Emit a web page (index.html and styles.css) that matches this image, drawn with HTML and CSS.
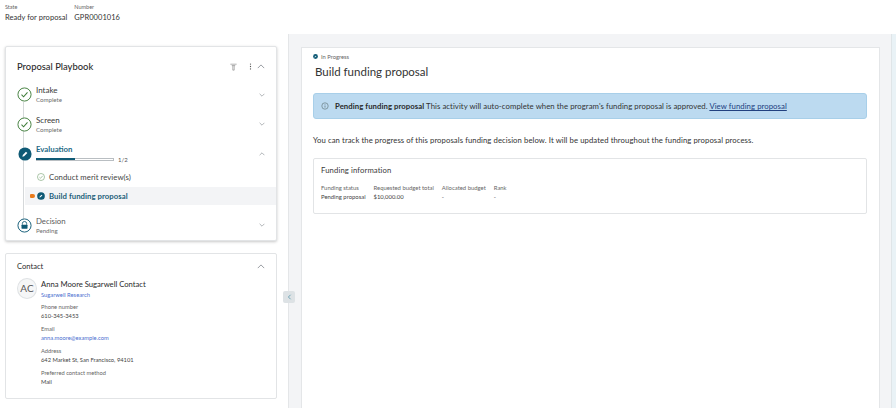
FILE: index.html
```html
<!DOCTYPE html>
<html lang="en">
<head>
<meta charset="utf-8">
<title>Build funding proposal</title>
<link rel="stylesheet" href="styles.css">
</head>
<body>
<header class="top">
  <div class="field"><span class="field-label">State</span><span class="field-value">Ready for proposal</span></div>
  <div class="field"><span class="field-label">Number</span><span class="field-value">GPR0001016</span></div>
</header>
<div class="layout">
  <aside class="side">
    <section class="card playbook">
      <div class="pb-head">
        <h2>Proposal Playbook</h2>
        <svg class="ic-filter" viewBox="0 0 10 10"><path d="M.5 1h9M2.500 3h5M4 3v6.500h2V3" fill="none" stroke="#777" stroke-width=".8"/></svg>
        <svg class="ic-dots" viewBox="0 0 4 10"><circle cx="2" cy="1.500" r=".9"/><circle cx="2" cy="5" r=".9"/><circle cx="2" cy="8.500" r=".9"/></svg>
        <svg class="chev big" viewBox="0 0 10 6"><path d="M1 5l4-4 4 4"/></svg>
      </div>
      <div class="stages">
        <div class="stage">
          <svg class="stage-ic" viewBox="0 0 16 16"><circle cx="8" cy="8" r="7" fill="#fff" stroke="#3f7d3a" stroke-width="1"/><path d="M4.800 8.200l2.200 2.200 4.200-4.600" fill="none" stroke="#3f7d3a" stroke-width="1.100"/></svg>
          <div class="stage-text"><span class="stage-name">Intake</span><span class="stage-sub">Complete</span></div>
          <svg class="chev" viewBox="0 0 10 6"><path d="M1 1l4 4 4-4"/></svg>
        </div>
        <div class="stage s-screen">
          <svg class="stage-ic" viewBox="0 0 16 16"><circle cx="8" cy="8" r="7" fill="#fff" stroke="#3f7d3a" stroke-width="1"/><path d="M4.800 8.200l2.200 2.200 4.200-4.600" fill="none" stroke="#3f7d3a" stroke-width="1.100"/></svg>
          <div class="stage-text"><span class="stage-name">Screen</span><span class="stage-sub">Complete</span></div>
          <svg class="chev" viewBox="0 0 10 6"><path d="M1 1l4 4 4-4"/></svg>
        </div>
        <div class="stage s-eval">
          <svg class="stage-ic" viewBox="0 0 16 16"><circle cx="8" cy="8" r="7.500" fill="#0f5a75"/><path d="M5 11l.5-2 3.600-3.700 1.600 1.600L7 10.500z" fill="#fff"/></svg>
          <div class="stage-text"><span class="stage-name active">Evaluation</span>
            <span class="progress"><span class="track"><span class="fill"></span></span><span class="count">1/2</span></span>
          </div>
          <svg class="chev" viewBox="0 0 10 6"><path d="M1 5l4-4 4 4"/></svg>
        </div>
        <div class="task t-done">
          <svg class="task-ic" viewBox="0 0 10 10"><circle cx="5" cy="5" r="4.400" fill="none" stroke="#6c9a67" stroke-width=".7"/><path d="M3 5.200l1.400 1.400 2.700-3" fill="none" stroke="#6c9a67" stroke-width=".7"/></svg>
          <span>Conduct merit review(s)</span>
        </div>
        <div class="task t-current">
          <span class="marker"></span>
          <svg class="task-ic" viewBox="0 0 10 10"><circle cx="5" cy="5" r="4.800" fill="#0f5a75"/><path d="M3 7l.4-1.300 2.300-2.300 1 1-2.400 2.200z" fill="#fff"/></svg>
          <span>Build funding proposal</span>
        </div>
        <div class="stage s-decision">
          <svg class="stage-ic" viewBox="0 0 16 16"><circle cx="8" cy="8" r="7" fill="#fff" stroke="#0f5a75" stroke-width="1"/><path d="M5.700 7.200V6a2.300 2.300 0 0 1 4.600 0v1.200" fill="none" stroke="#0f5a75" stroke-width=".9"/><rect x="4.800" y="7.200" width="6.400" height="4.200" rx=".5" fill="#0f5a75"/></svg>
          <div class="stage-text"><span class="stage-name muted">Decision</span><span class="stage-sub">Pending</span></div>
          <svg class="chev" viewBox="0 0 10 6"><path d="M1 1l4 4 4-4"/></svg>
        </div>
      </div>
    </section>
    <section class="card contact">
      <div class="contact-head"><h3>Contact</h3><svg class="chev big" viewBox="0 0 10 6"><path d="M1 5l4-4 4 4"/></svg></div>
      <div class="contact-body">
        <div class="avatar">AC</div>
        <div class="contact-info">
          <div class="contact-name">Anna Moore Sugarwell Contact</div>
          <a class="link org">Sugarwell Research</a>
          <dl>
            <dt>Phone number</dt><dd>610-345-3453</dd>
            <dt>Email</dt><dd><a class="link">anna.moore@example.com</a></dd>
            <dt>Address</dt><dd>642 Market St, San Francisco, 94101</dd>
            <dt>Preferred contact method</dt><dd>Mail</dd>
          </dl>
        </div>
      </div>
    </section>
  </aside>
  <main class="main">
    <button class="collapse" aria-label="Collapse"><svg viewBox="0 0 6 8"><path d="M4.500 1L1.500 4l3 3" fill="none" stroke="#4f93a8" stroke-width="1"/></svg></button>
    <article class="panel">
      <div class="status"><svg viewBox="0 0 10 10"><circle cx="5" cy="5" r="4.800" fill="#0f5a75"/><path d="M3 7l.4-1.300 2.300-2.300 1 1-2.400 2.200z" fill="#fff"/></svg><span>In Progress</span></div>
      <h1>Build funding proposal</h1>
      <div class="banner">
        <svg viewBox="0 0 10 10"><circle cx="5" cy="5" r="4" fill="none" stroke="#566" stroke-width=".7"/><path d="M5 4.400v2.600M5 3v.8" stroke="#566" stroke-width=".8"/></svg>
        <p><b>Pending funding proposal</b> This activity will auto-complete when the program's funding proposal is approved. <a>View funding proposal</a></p>
      </div>
      <p class="intro">You can track the progress of this proposals funding decision below. It will be updated throughout the funding proposal process.</p>
      <section class="funding">
        <h4>Funding information</h4>
        <div class="fund-grid">
          <span class="fl">Funding status</span><span class="fl">Requested budget total</span><span class="fl">Allocated budget</span><span class="fl">Rank</span>
          <span>Pending proposal</span><span>$10,000.00</span><span>-</span><span>-</span>
        </div>
      </section>
    </article>
  </main>
  <div class="strip"></div>
</div>
</body>
</html>
```
FILE: styles.css
```css
* { box-sizing: border-box; }
html, body { margin: 0; height: 100%; }
body { width: 896px; height: 408px; overflow: hidden; background: #fff; font-family: Lato, "Open Sans", sans-serif; color: #2e2e2e; }
svg { display: block; flex: none; }
h1, h2, h3, h4, p, dl, dd { margin: 0; font-weight: 400; }

.top { height: 34px; display: flex; gap: 7px; padding: 4px 5px 0; }
.field { display: flex; flex-direction: column; }
.field-label { font-size: 5.500px; line-height: 7px; color: #666; }
.field-value { font-size: 7.500px; line-height: 13px; color: #333; letter-spacing: .05px; }

.layout { display: flex; height: 374px; }
.side { width: 289px; flex: none; padding: 12px 11px 0 5px; border-right: 1px solid #e4e6e8; display: flex; flex-direction: column; gap: 12px; }
.card { width: 272px; background: #fff; border: 1px solid #e2e4e6; border-radius: 2px; }
.playbook { height: 195px; box-shadow: 0 1px 3px rgba(0,0,0,.22); }
.pb-head { height: 33px; display: flex; align-items: center; padding: 6px 11px 0 11px; }
.pb-head h2 { font-size: 9.400px; flex: 1; color: #2b2b2b; font-weight: 500; }
.ic-filter { width: 7px; height: 8px; margin-right: 12px; }
.ic-dots { width: 3px; height: 7px; margin-right: 5.500px; fill: #555; }
.chev { width: 6px; height: 4px; fill: none; stroke: #8a8f94; stroke-width: 1.100; margin-left: auto; }
.chev.big { width: 8px; height: 5px; margin-left: 0; stroke: #8c9196; }

.stages { position: relative; }
.stages::before { content: ""; position: absolute; left: 17px; top: 22px; bottom: 14px; width: 1px; background: #d5d8da; }
.stage { position: relative; display: flex; align-items: center; padding: 0 11px; height: 29px; }
.s-screen { height: 30px; }
.stage-ic { width: 15px; height: 15px; margin-right: 4px; }
.s-eval .stage-ic { width: 14px; height: 14px; margin-left: .5px; margin-right: 4.500px; }
.stage-text { display: flex; flex-direction: column; }
.stage-name { font-size: 8px; line-height: 11px; color: #3a3a3a; }
.stage-name.active { font-size: 7.800px; color: #1e6a86; font-weight: 700; }
.stage-name.muted { font-size: 7.800px; color: #5a5a5a; }
.stage-sub { font-size: 6.100px; line-height: 8px; color: #6e6e6e; }
.s-eval { height: 28px; margin-top: .5px; }
.progress { display: flex; align-items: center; gap: 4px; height: 9px; }
.track { width: 78px; height: 3px; border: 1px solid #b9bec2; display: block; position: relative; background: #fff; }
.fill { position: absolute; left: -1px; top: -1px; height: 2.500px; width: 39px; background: #0f5a75; }
.count { font-size: 6px; color: #555; }

.task { display: flex; align-items: center; height: 18px; margin-left: 19px; padding-left: 12px; gap: 4px; font-size: 7.750px; letter-spacing: .05px; color: #444; position: relative; }
.task-ic { width: 8px; height: 8px; }
.t-done { margin-top: .5px; margin-bottom: 1px; }
.t-current { background: #f3f4f6; font-weight: 700; color: #1e5f7a; }
.s-decision { margin-top: 5px; height: 30px; }
.marker { position: absolute; left: 5px; top: 7px; width: 5px; height: 4px; border-radius: 1px 2px 2px 1px; background: #e87a1c; }

.contact { height: 146px; }
.contact-head { display: flex; justify-content: space-between; align-items: center; padding: 6px 11px 0; height: 18px; }
.contact-head h3 { font-size: 7.600px; color: #2e2e2e; }
.contact-body { display: flex; padding: 7px 0 0 11px; gap: 4px; }
.avatar { width: 20px; height: 21px; margin-top: -1px; flex: none; border-radius: 50%; border: 1px solid #dfe2e4; background: #f5f6f7; font-size: 10px; line-height: 19px; text-align: center; color: #555; }
.contact-name { font-size: 7.700px; line-height: 11px; color: #2b2b2b; letter-spacing: -.02px; }
.link { color: #4a6fd0; }
.org { display: block; font-size: 5.800px; line-height: 9px; }
dl { margin-top: 2.500px; }
dt { font-size: 5.750px; line-height: 9px; color: #666; }
dd { font-size: 5.750px; line-height: 9px; color: #444; margin-bottom: 4px; }

.main { position: relative; flex: 1; background: #f3f4f6; padding: 13px 11px 0 12px; min-width: 0; }
.panel { height: 361px; background: #fff; border: 1px solid #e4e6e8; border-bottom: 0; padding: 5px 12px 0 11px; }
.collapse { position: absolute; left: -6px; top: 257px; width: 12px; height: 12px; padding: 0; border: 0; border-radius: 2px; background: #dde2e5; display: flex; align-items: center; justify-content: center; }
.collapse svg { width: 5px; height: 6px; }
.status { display: flex; align-items: center; gap: 3px; font-size: 5.800px; line-height: 7px; color: #666; }
.status svg { width: 5px; height: 5px; }
h1 { font-size: 11.500px; line-height: 16px; margin: 3.500px 0 0 2px; color: #333; }
.banner { display: flex; align-items: center; height: 26px; margin-top: 13.500px; padding-left: 7px; background: #bcdaf0; border: 1px solid #a8cfe9; border-radius: 3px; gap: 6px; }
.banner svg { width: 8px; height: 8px; }
.banner p { font-size: 7.760px; color: #333; white-space: nowrap; letter-spacing: .06px; }
.banner b { color: #2a2a2a; }
.banner a { color: #21407f; text-decoration: underline; }
.intro { font-size: 7.700px; line-height: 10px; margin-top: 16px; color: #333; letter-spacing: .09px; white-space: nowrap; }
.funding { height: 56px; margin-top: 13px; border: 1px solid #e2e4e6; border-radius: 2px; padding: 6px 7px; }
h4 { font-size: 7.700px; line-height: 10px; color: #3a3a3a; letter-spacing: .12px; }
.fund-grid { display: grid; grid-template-columns: auto auto auto auto; justify-content: start; column-gap: 8px; margin-top: 8px; font-size: 5.900px; line-height: 9px; color: #444; }
.fl { color: #666; }
.strip { width: 5px; flex: none; background: #e9f2f6; border-left: 1px solid #dfe5e8; }
```
